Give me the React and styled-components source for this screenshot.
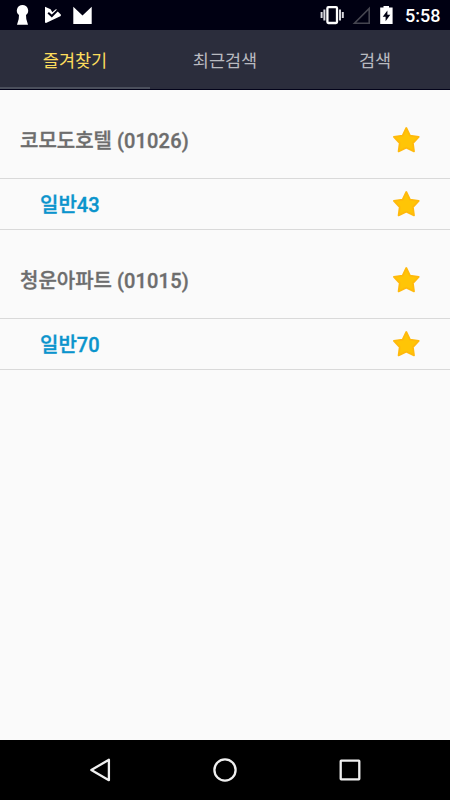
import React, { useState } from 'react';
import styled, { createGlobalStyle } from 'styled-components';

const GlobalStyle = createGlobalStyle`
  * {
    box-sizing: border-box;
  }
  body {
    margin: 0;
    background-color: #fafafa;
    font-family: Roboto, 'Noto Sans CJK KR', sans-serif;
  }
`;

const Screen = styled.div`
  display: flex;
  flex-direction: column;
  width: 450px;
  height: 800px;
  background-color: #fafafa;
`;

const StatusBar = styled.header`
  display: flex;
  justify-content: space-between;
  height: 30px;
  flex-shrink: 0;
  background-color: #000012;
  svg {
    display: block;
  }
`;

const StatusGroup = styled.div`
  display: flex;
`;

const Clock = styled.span`
  width: 50px;
  padding-left: 5px;
  font-size: 18px;
  font-weight: 500;
  line-height: 31px;
  color: #ffffff;
`;

const TabList = styled.nav`
  display: flex;
  height: 60px;
  flex-shrink: 0;
  border-bottom: 1px solid #03031a;
  background-color: #2b2d3c;
`;

const Tab = styled.button`
  flex: 1;
  padding: 5px 0 0;
  border: 0;
  border-bottom: 2px solid ${({ $active }) => ($active ? '#4b4f5c' : '#2b2d3c')};
  background: none;
  font-family: inherit;
  font-size: 17.5px;
  line-height: 52px;
  color: ${({ $active }) => ($active ? '#fddd5c' : '#b9bac0')};
  cursor: pointer;
`;

const List = styled.ul`
  flex: 1;
  margin: 0;
  padding: 0;
  list-style: none;
`;

const Row = styled.li`
  display: flex;
  align-items: center;
  justify-content: space-between;
  height: ${({ $route }) => ($route ? '51px' : '89px')};
  padding: ${({ $route }) => ($route ? '0 30px 0 40px' : '12px 30px 0 20px')};
  border-bottom: 1px solid #d9d9d9;
  font-size: 20px;
  font-weight: 500;
  color: ${({ $route }) => ($route ? '#0a94cc' : '#6d6d6d')};
`;

const RowName = styled.span`
  padding-top: 2px;
  line-height: 28px;
  -webkit-text-stroke: 0.35px currentColor;
`;

const StopNumber = styled.span`
  letter-spacing: 0.15px;
`;

const NavBar = styled.footer`
  display: flex;
  justify-content: center;
  align-items: center;
  gap: 95px;
  height: 60px;
  flex-shrink: 0;
  background-color: #000000;
  svg {
    display: block;
    fill: none;
    stroke: #f0f0f0;
    stroke-width: 2.3;
    stroke-linejoin: round;
  }
`;

const StarIcon = () => (
  <svg width='28' height='28' viewBox='0 0 28 28'>
    <path
      d='M14.3 2 L18 9.6 L26.7 10.8 L20.9 17.1 L22 25.4 L14.3 21.8 L6.6 25.4 L7.7 17.1 L1.9 10.8 L10.6 9.6 Z'
      fill='#ffc506'
      stroke='#ffb90c'
      strokeWidth='1.8'
      strokeLinejoin='round'
    />
  </svg>
);

const NotificationIcons = () => (
  <svg width='100' height='30' viewBox='0 0 100 30' fill='#ffffff'>
    <path d='M22.5 5 A5.6 5.6 0 0 1 26 15 L26.3 19 L28 24.7 H17 L18.7 19 L19 15 A5.6 5.6 0 0 1 22.5 5 Z' />
    <path d='M45 6.8 L50.6 9.2 L52.3 12.3 L56.2 9 L58 11.7 L60.8 14.6 V16 L46 23 L45 22.5 Z' />
    <path d='M48.2 12.7 L51.8 16 L58.5 9.4' fill='none' stroke='#000012' strokeWidth='2' />
    <path d='M73.3 6.7 L82.5 15.5 L91.7 6.7 V24 H73.3 Z' />
  </svg>
);

const SystemIcons = () => (
  <svg width='80' height='30' viewBox='320 0 80 30'>
    <rect x='327.4' y='7.2' width='9.6' height='15.8' rx='1' fill='none' stroke='#ffffff' strokeWidth='2.3' />
    <path
      d='M324.4 9.5 V20.5 M321.6 12 V18 M340 9.5 V20.5 M342.8 12 V18'
      fill='none'
      stroke='#d8d8de'
      strokeWidth='2'
    />
    <path d='M354.5 23.2 H369.2 V8.4 Z' fill='none' stroke='#454550' strokeWidth='1.6' />
    <path
      d='M383.5 6 H389 V7.5 H392.6 V24 H380.2 V7.5 H383.5 Z M387.4 10.5 L382.7 16.7 H385.6 V21.2 L390.3 14.7 H387.4 Z'
      fill='#ffffff'
      fillRule='evenodd'
    />
  </svg>
);

const tabs = ['즐겨찾기', '최근검색', '검색'];

const favorites = [
  { id: '01026', name: '코모도호텔', routes: ['일반43'] },
  { id: '01015', name: '청운아파트', routes: ['일반70'] },
];

function Favorite({ id, name, routes }) {
  return (
    <>
      <Row>
        <RowName>
          {name} <StopNumber>({id})</StopNumber>
        </RowName>
        <StarIcon />
      </Row>
      {routes.map((route) => (
        <Row key={route} $route>
          <RowName>{route}</RowName>
          <StarIcon />
        </Row>
      ))}
    </>
  );
}

function App() {
  const [activeTab, setActiveTab] = useState(tabs[0]);

  return (
    <Screen>
      <GlobalStyle />
      <StatusBar>
        <NotificationIcons />
        <StatusGroup>
          <SystemIcons />
          <Clock>5:58</Clock>
        </StatusGroup>
      </StatusBar>
      <TabList>
        {tabs.map((tab) => (
          <Tab
            key={tab}
            $active={tab === activeTab}
            onClick={() => setActiveTab(tab)}
          >
            {tab}
          </Tab>
        ))}
      </TabList>
      <List>
        {favorites.map((stop) => (
          <Favorite key={stop.id} {...stop} />
        ))}
      </List>
      <NavBar>
        <svg width='30' height='30' viewBox='0 0 30 30'>
          <path d='M6.3 15 L23.9 4.8 V25.2 Z' />
        </svg>
        <svg width='30' height='30' viewBox='0 0 30 30'>
          <circle cx='15' cy='15' r='10.6' />
        </svg>
        <svg width='30' height='30' viewBox='0 0 30 30'>
          <rect x='5.7' y='5.7' width='18.6' height='18.6' rx='0.5' />
        </svg>
      </NavBar>
    </Screen>
  );
}

export default App;
